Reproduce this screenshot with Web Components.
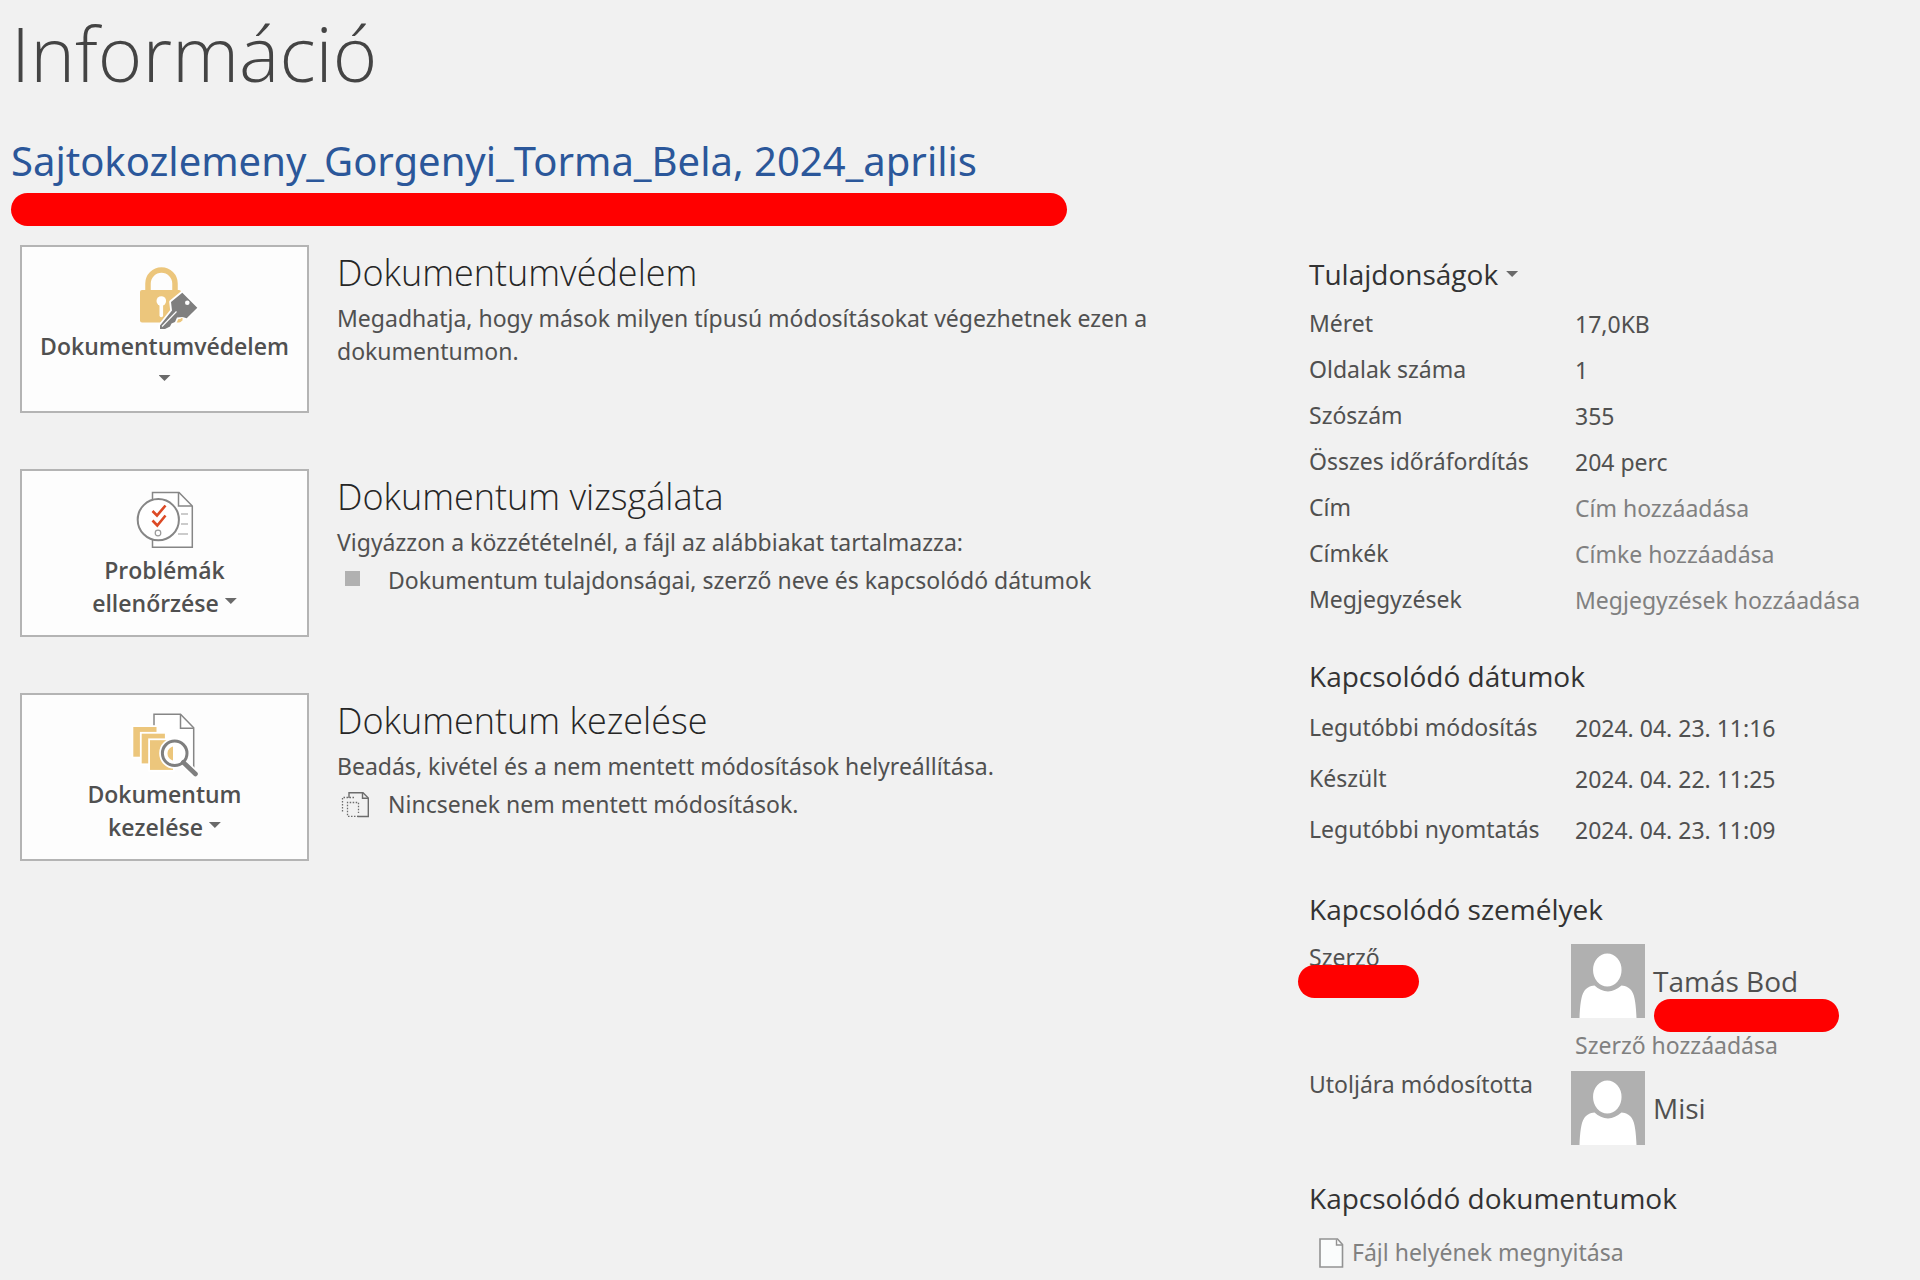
<!DOCTYPE html>
<html lang="hu">
<head>
<meta charset="utf-8">
<title>Információ</title>
<style>
  body {
    margin: 0;
    min-height: 100vh;
    background: #f1f1f1;
    color: #505050;
    font: 400 23px/33px "Noto Sans", "Open Sans", sans-serif;
  }
</style>
</head>
<body>
<info-page>
  <page-header slot="header" file="Sajtokozlemeny_Gorgenyi_Torma_Bela, 2024_aprilis">Információ</page-header>

  <action-section heading="Dokumentumvédelem">
    <menu-button slot="action" icon="lock" stacked>Dokumentumvédelem</menu-button>
    Megadhatja, hogy mások milyen típusú módosításokat végezhetnek ezen a dokumentumon.
  </action-section>
  <action-section heading="Dokumentum vizsgálata">
    <menu-button slot="action" icon="check">Problémák ellenőrzése</menu-button>
    Vigyázzon a közzétételnél, a fájl az alábbiakat tartalmazza:
    <note-line slot="note" icon="bullet">Dokumentum tulajdonságai, szerző neve és kapcsolódó dátumok</note-line>
  </action-section>
  <action-section heading="Dokumentum kezelése">
    <menu-button slot="action" icon="manage">Dokumentum kezelése</menu-button>
    Beadás, kivétel és a nem mentett módosítások helyreállítása.
    <note-line slot="note" icon="draft">Nincsenek nem mentett módosítások.</note-line>
  </action-section>

  <info-group slot="side" heading="Tulajdonságok" menu>
    <info-row label="Méret">17,0KB</info-row>
    <info-row label="Oldalak száma">1</info-row>
    <info-row label="Szószám">355</info-row>
    <info-row label="Összes időráfordítás">204 perc</info-row>
    <info-row label="Cím" hint="Cím hozzáadása"></info-row>
    <info-row label="Címkék" hint="Címke hozzáadása"></info-row>
    <info-row label="Megjegyzések" hint="Megjegyzések hozzáadása"></info-row>
  </info-group>
  <info-group slot="side" heading="Kapcsolódó dátumok" class="dates">
    <info-row label="Legutóbbi módosítás">2024. 04. 23. 11:16</info-row>
    <info-row label="Készült">2024. 04. 22. 11:25</info-row>
    <info-row label="Legutóbbi nyomtatás">2024. 04. 23. 11:09</info-row>
  </info-group>
  <info-group slot="side" heading="Kapcsolódó személyek" class="people">
    <person-row label="Szerző" name="Tamás Bod" hint="Szerző hozzáadása" masked></person-row>
    <person-row label="Utoljára módosította" name="Misi"></person-row>
  </info-group>
  <info-group slot="side" heading="Kapcsolódó dokumentumok" class="files">
    <file-link>Fájl helyének megnyitása</file-link>
  </info-group>
</info-page>

<script>
const BASE = `
  *, *::before, *::after { box-sizing: border-box; }
  h1, h2, h3, p { margin: 0; font-weight: inherit; font-family: "Open Sans", "Noto Sans", sans-serif; }
  p { font-family: inherit; }
  button, input { font: inherit; color: inherit; background: none; border: 0; padding: 0; margin: 0; }
  svg { display: block; }
  .caret { display: inline-block; width: 12px; height: 6px; background: #6a6a6a; clip-path: polygon(0 0, 100% 0, 50% 100%); }
`;

const ICONS = {
  lock: `<svg width="73" height="71" viewBox="128 259 73 71" aria-hidden="true">
    <path d="M148 292V283.500a13.500 13.500 0 0 1 27 0V292" fill="none" stroke="#ecc67c" stroke-width="5.500"/>
    <rect x="140" y="290" width="41" height="32.500" rx="2" fill="#ecc67c"/>
    <circle cx="161.300" cy="301" r="4.800" fill="#fff"/>
    <path d="M161.300 303v12.500" stroke="#fff" stroke-width="3.600" stroke-linecap="round"/>
    <path d="M182.300 292.700L197.300 307.700L186.700 318.300L182.500 317L177 317.500L175 322L171.500 323.500L170 326.500L165 329H160V325.500L172 310.500L171 302Z" fill="#7f7f7f" stroke="#fff" stroke-width="3.600" paint-order="stroke" stroke-linejoin="round"/>
    <path d="M178.500 320l4-2.500v3l-2.500 1.800z" fill="#ecc67c"/>
    <path d="M162 326.500L176.500 311.500" stroke="#fff" stroke-width="1.100"/>
    <circle cx="187.300" cy="302.700" r="2.300" fill="#fff"/>
  </svg>`,
  check: `<svg width="73" height="71" viewBox="128 483 73 71" aria-hidden="true">
    <path d="M152.500 492.500H179L192.300 506V547.300H152.500Z" fill="#fff" stroke="#868686" stroke-width="1.500"/>
    <path d="M178.500 492.500V506H192" fill="none" stroke="#868686" stroke-width="1.500"/>
    <path d="M181 514h7M181 524h7M178 534h10" stroke="#9a9a9a" stroke-width="1.200"/>
    <circle cx="158.300" cy="519.700" r="20.600" fill="#fff" stroke="#868686" stroke-width="2"/>
    <path d="M152.500 511l4.500 4.500 8.500-10M152.500 520.500l4.800 5 8.200-10" fill="none" stroke="#dc4a26" stroke-width="2.600"/>
    <circle cx="158" cy="533" r="2.800" fill="none" stroke="#9a9a9a" stroke-width="1.200"/>
  </svg>`,
  manage: `<svg width="73" height="71" viewBox="128 707 73 71" aria-hidden="true">
    <path d="M154 740V714.300H180.500L193.700 727.700V772" fill="#fff" stroke="#868686" stroke-width="1.500"/>
    <path d="M180.500 714.300V728.300H193.700" fill="none" stroke="#868686" stroke-width="1.500"/>
    <g fill="#ecc67c" stroke="#fff" stroke-width="3.600" paint-order="stroke">
      <rect x="133.300" y="727" width="23.200" height="29.700"/>
      <rect x="141.700" y="733.700" width="23.200" height="29.700"/>
      <rect x="150" y="740.200" width="23" height="29.700"/>
    </g>
    <path d="M183.300 762.300L195.500 774" stroke="#fff" stroke-width="8"/>
    <circle cx="174.700" cy="753.300" r="12.300" fill="#fff" stroke="#fff" stroke-width="6.500"/>
    <path d="M173 746.500V760.500C169 759 167.500 756.500 167.500 753.500S169 748 173 746.500Z" fill="#ecc67c"/>
    <circle cx="174.700" cy="753.300" r="12.300" fill="none" stroke="#7f7f7f" stroke-width="3"/>
    <path d="M183.300 762.300L195.500 774" stroke="#7f7f7f" stroke-width="4.600" stroke-linecap="round"/>
  </svg>`,
  bullet: `<svg width="28" height="26" viewBox="341 567 28 26" aria-hidden="true"><path d="M345 570h15v15h-15z" fill="#b1b1b1"/></svg>`,
  draft: `<svg width="28" height="26" viewBox="341 791 28 26" aria-hidden="true">
    <path d="M349 797V791.800H363L368.300 797V815.500H357.500" fill="none" stroke="#6c6c6c" stroke-width="1.400"/>
    <path d="M362.500 792V797.300H368" fill="none" stroke="#6c6c6c" stroke-width="1.400"/>
    <path d="M354 796.500H342.500V812M358.500 815.300H347.500V801.500H358.500V812" fill="none" stroke="#6c6c6c" stroke-width="1.300" stroke-dasharray="1.500 1.500"/>
  </svg>`,
  file: `<svg width="25" height="30" viewBox="0 0 25 30" aria-hidden="true">
    <path d="M1 1H18.500L23.500 6.500V29H1Z" fill="#fafcfc" stroke="#929292" stroke-width="1.600"/>
    <path d="M17.500 1.500V7H23" fill="none" stroke="#929292" stroke-width="1.400"/>
  </svg>`,
  avatar: `<svg width="74" height="74" viewBox="0 0 74 74" aria-hidden="true">
    <path d="M0 0h74v74H0z" fill="#b0b0b0"/>
    <path d="M8.500 74C9 62 10 52 13 47.500C15.500 43.500 19 42 23.500 41.500C27.500 45 32 47.500 37 47.500S46 45 50.500 41.500C55 42 58.500 43.500 61 47.500C64 52 65 62 65.500 74Z" fill="#fff"/>
    <ellipse cx="36.300" cy="26" rx="15" ry="17.300" fill="#fff" stroke="#b0b0b0" stroke-width="1.500"/>
  </svg>`
};

function define(name, render) {
  customElements.define(name, class extends HTMLElement {
    constructor() {
      super();
      this.attachShadow({ mode: "open" });
    }
    connectedCallback() {
      const t = document.createElement("template");
      t.innerHTML = render(k => this.getAttribute(k) || "", k => this.hasAttribute(k));
      this.shadowRoot.replaceChildren(t.content.cloneNode(true));
    }
  });
}

define("mask-bar", () => `<style>
  :host { display: block; height: 33px; border-radius: 17px; background: #f00; }
</style>`);

define("page-header", a => `<style>${BASE}
  :host { display: block; padding: 3px 11px 0; }
  h1 { font-size: 76px; line-height: 100px; font-weight: 300; color: #444; }
  h2 { margin-top: 30px; font-family: inherit; font-size: 40px; line-height: 56px; color: #2b579a; }
  mask-bar { margin-top: 4px; max-width: 1056px; }
</style>
<h1><slot></slot></h1><h2>${a("file")}</h2><mask-bar></mask-bar>`);

define("info-page", () => `<style>${BASE}
  :host { display: block; }
  main { display: grid; grid-template-columns: minmax(0, 1fr) 611px; margin-top: 19px; padding-left: 20px; }
  .actions { display: flex; flex-direction: column; gap: 56px; }
  aside { display: flex; flex-direction: column; gap: 33px; padding-top: 9px; }
</style>
<slot name="header"></slot>
<main><div class="actions"><slot></slot></div><aside><slot name="side"></slot></aside></main>`);

define("action-section", a => `<style>${BASE}
  :host { display: grid; grid-template-columns: 289px minmax(0, 840px); gap: 28px; align-items: start; }
  .text { padding-top: 4px; }
  h2 { font-size: 36px; line-height: 48px; font-weight: 300; color: #262626; margin-bottom: 5px; }
</style>
<slot name="action"></slot>
<div class="text"><h2>${a("heading")}</h2><p><slot></slot></p><slot name="note"></slot></div>`);

define("menu-button", (a, has) => `<style>${BASE}
  :host { display: block; font-family: "Open Sans", "Noto Sans", sans-serif; }
  button { display: flex; flex-direction: column; align-items: center; justify-content: flex-start; width: 100%; height: 168px; padding: 12px 12px 0; border: 2px solid #b4b4b4; background: #fdfdfd; font-weight: 600; color: #505050; }
  .label { max-width: ${has("stacked") ? "none" : "190px"}; }
  .caret { vertical-align: 8px; }
  .below { margin: 12px 0 0; }
</style>
<button type="button" aria-haspopup="menu">${ICONS[a("icon")]}
<span class="label"><slot></slot>${has("stacked") ? "" : `&nbsp;<span class="caret"></span>`}</span>
${has("stacked") ? `<span class="caret below"></span>` : ""}</button>`);

define("note-line", a => `<style>${BASE}
  :host { display: flex; align-items: center; gap: 19px; margin-top: 5px; padding-left: 4px; }
</style>${ICONS[a("icon")]}<span><slot></slot></span>`);

define("info-group", (a, has) => `<style>${BASE}
  :host { display: block; }
  h3, button { font-size: 28px; line-height: 40px; color: #333; }
  h3 { margin-bottom: 7px; }
  button { display: flex; align-items: center; gap: 8px; }
  :host(.dates) { --row: 51px; }
  :host(.people) h3 { margin-bottom: 12px; }
  :host(.files) h3 { margin-bottom: 18px; }
</style>
<h3>${has("menu") ? `<button type="button" aria-haspopup="menu">${a("heading")}<span class="caret"></span></button>` : a("heading")}</h3>
<slot></slot>`);

define("info-row", a => `<style>${BASE}
  :host { --h: var(--row, 46px); display: grid; grid-template-columns: 266px minmax(0, 1fr); height: var(--h); line-height: var(--h); white-space: nowrap; }
  .label { line-height: calc(var(--h) - 2px); }
  input { width: 100%; height: var(--h); }
  input::placeholder { color: #808080; opacity: 1; }
</style>
${a("hint")
  ? `<label class="label" for="f">${a("label")}</label><input id="f" type="text" placeholder="${a("hint")}">`
  : `<span class="label">${a("label")}</span><span><slot></slot></span>`}`);

define("person-row", (a, has) => `<style>${BASE}
  :host { display: grid; grid-template-columns: 262px minmax(0, 1fr); }
  :host([masked]) { margin-bottom: 6px; }
  .label, .person { position: relative; }
  .person { display: flex; align-items: center; gap: 8px; margin-top: 3px; font: 28px/40px "Open Sans", "Noto Sans", sans-serif; }
  mask-bar { position: absolute; }
  .label mask-bar { left: -11px; top: 24px; width: 121px; }
  .person mask-bar { left: 83px; top: 55px; width: 185px; }
  input { width: 100%; height: 33px; margin-top: 11px; padding-left: 4px; vertical-align: top; }
  input::placeholder { color: #808080; opacity: 1; }
</style>
<div class="label">${a("label")}${has("masked") ? `<mask-bar></mask-bar>` : ""}</div>
<div><div class="person">${ICONS.avatar}<span>${a("name")}</span>${has("masked") ? `<mask-bar></mask-bar>` : ""}</div>
${a("hint") ? `<input type="text" aria-label="${a("hint")}" placeholder="${a("hint")}">` : ""}</div>`);

define("file-link", () => `<style>${BASE}
  :host { display: block; padding-left: 10px; }
  a { display: flex; align-items: center; gap: 8px; color: #808080; text-decoration: none; }
</style><a href="#">${ICONS.file}<span><slot></slot></span></a>`);
</script>
</body>
</html>
